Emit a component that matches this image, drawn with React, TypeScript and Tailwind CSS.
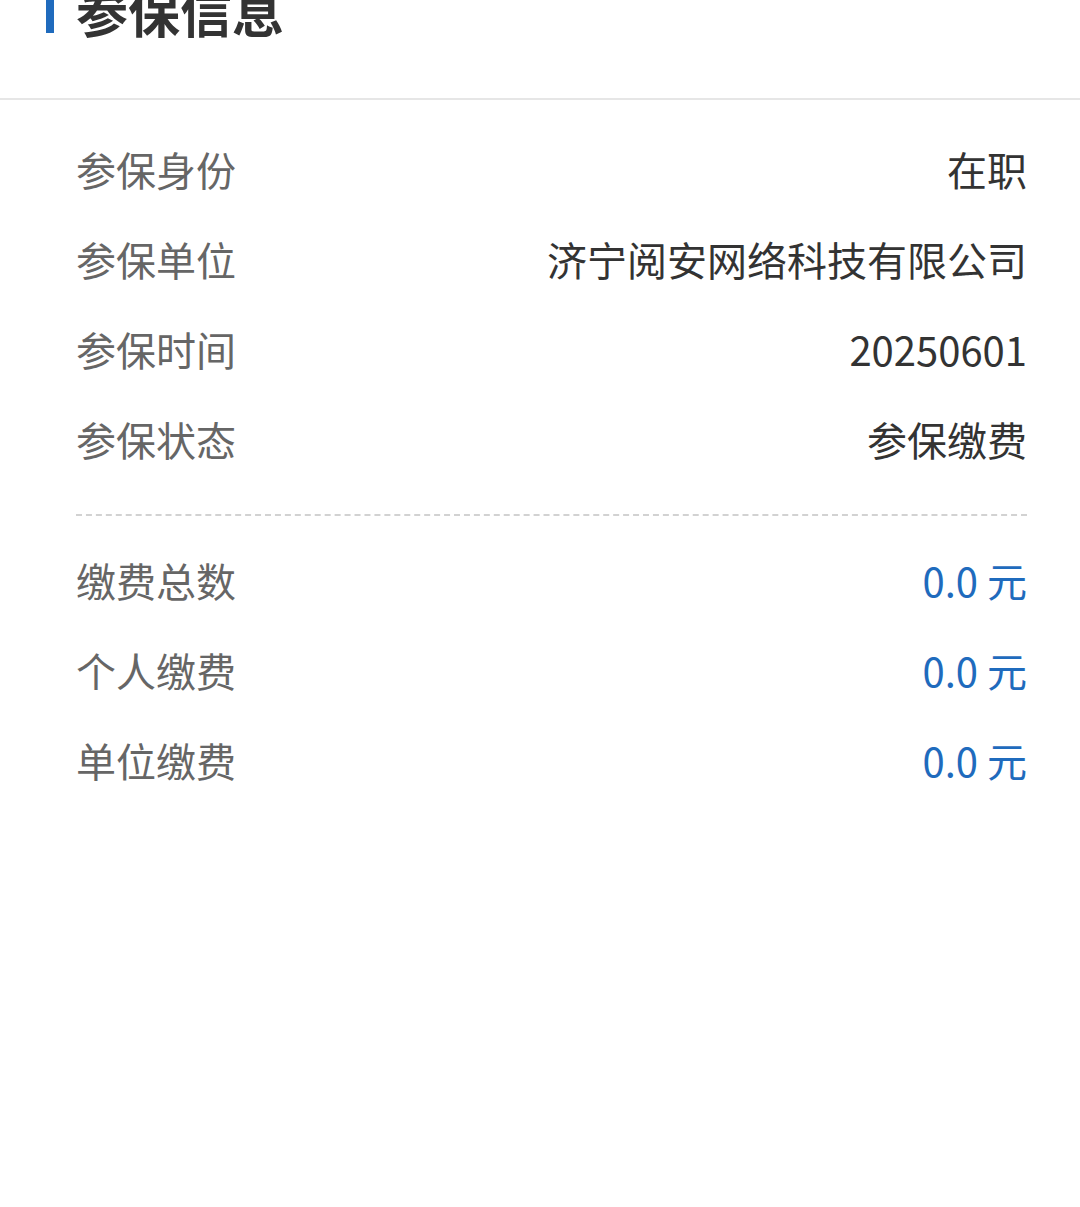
const FONT = { fontFamily: '"Noto Sans CJK SC", Roboto, "Noto Sans", sans-serif' };

const BASIC = [
  { label: "参保身份", value: "在职" },
  { label: "参保单位", value: "济宁阅安网络科技有限公司" },
  { label: "参保时间", value: "20250601" },
  { label: "参保状态", value: "参保缴费" },
];

const PAYMENTS = [
  { label: "缴费总数", value: "0.0 元" },
  { label: "个人缴费", value: "0.0 元" },
  { label: "单位缴费", value: "0.0 元" },
];

function Row({ label, value, blue }: { label: string; value: string; blue?: boolean }) {
  return (
    <div className="flex h-[90px] items-center justify-between text-[40px] leading-none">
      <span className="text-[#666666]">{label}</span>
      <span className={blue ? "text-[#1f6bbd]" : "text-[#333333]"}>{value}</span>
    </div>
  );
}

export default function App() {
  return (
    <div className="min-h-[1207px] overflow-hidden bg-white" style={FONT}>
      {/* Header */}
      <div className="relative h-[100px] border-b-2 border-[#e6e6e6]">
        <div className="absolute left-[46px] top-0 h-[33px] w-[8px] bg-[#1f6bbd]" />
        <div className="absolute left-[76px] top-[-15px] text-[52px] font-bold leading-[52px] text-[#333333]">
          参保信息
        </div>
      </div>

      <div className="pl-[76px] pr-[53px] pt-[24px]">
        {BASIC.map((r) => (
          <Row key={r.label} label={r.label} value={r.value} />
        ))}
        <div className="mt-[30px] mb-[19px] border-t-2 border-dashed border-[#d2d2d2]" />
        {PAYMENTS.map((r) => (
          <Row key={r.label} label={r.label} value={r.value} blue />
        ))}
      </div>
    </div>
  );
}
